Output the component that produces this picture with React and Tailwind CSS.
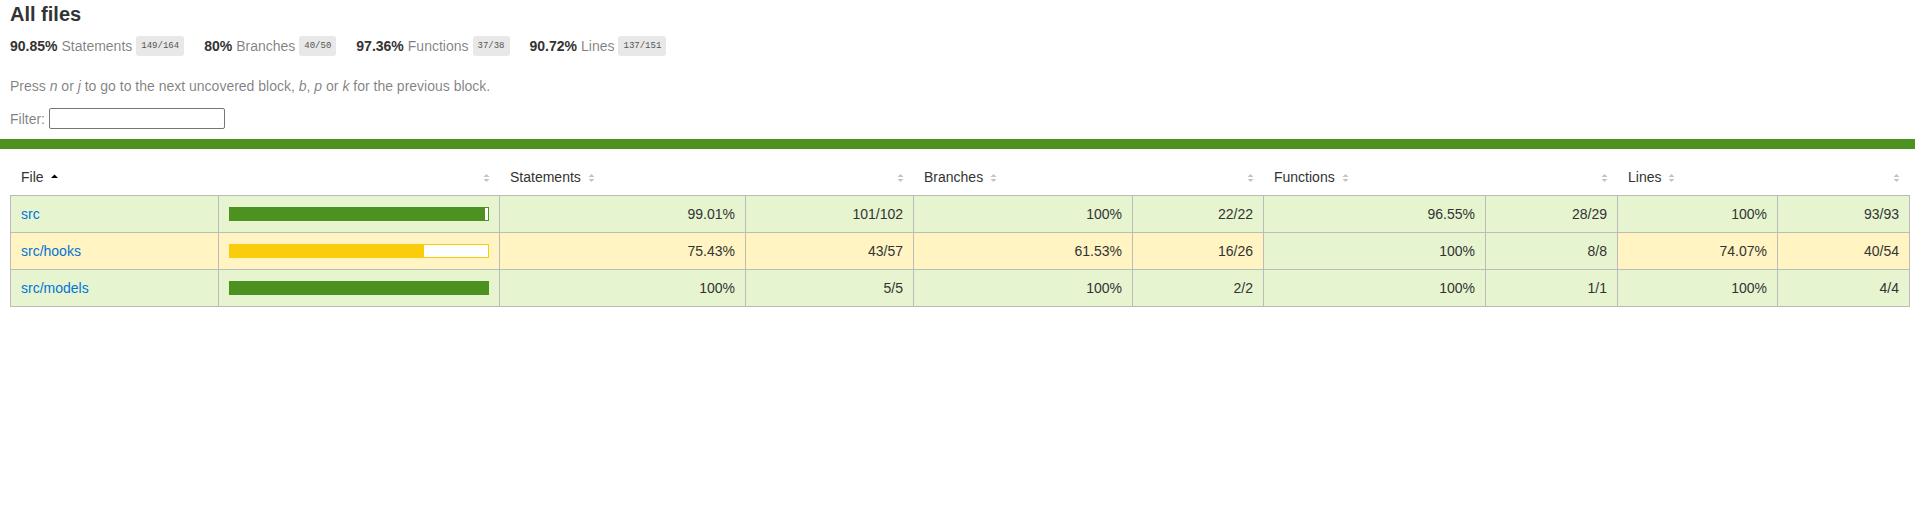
import React from 'react';

const summary = [
  { pct: '90.85%', label: 'Statements', frac: '149/164' },
  { pct: '80%', label: 'Branches', frac: '40/50' },
  { pct: '97.36%', label: 'Functions', frac: '37/38' },
  { pct: '90.72%', label: 'Lines', frac: '137/151' },
];

const rows = [
  {
    file: 'src',
    level: 'high',
    bar: 99,
    cells: [
      ['99.01%', '101/102', 'high'],
      ['100%', '22/22', 'high'],
      ['96.55%', '28/29', 'high'],
      ['100%', '93/93', 'high'],
    ],
  },
  {
    file: 'src/hooks',
    level: 'medium',
    bar: 75,
    cells: [
      ['75.43%', '43/57', 'medium'],
      ['61.53%', '16/26', 'medium'],
      ['100%', '8/8', 'high'],
      ['74.07%', '40/54', 'medium'],
    ],
  },
  {
    file: 'src/models',
    level: 'high',
    bar: 100,
    cells: [
      ['100%', '5/5', 'high'],
      ['100%', '2/2', 'high'],
      ['100%', '1/1', 'high'],
      ['100%', '4/4', 'high'],
    ],
  },
];

const cols = 'grid grid-cols-[208px_281px_246px_168px_219px_131px_222px_132px_160px_132px]';

const bgFor = level => (level === 'medium' ? 'bg-[#fff4c2]' : 'bg-[#e6f5d0]');

const Sorter = ({ active }) => (
  <svg width="7" height="10" viewBox="0 0 7 10" className="inline-block">
    {active ? (
      <path d="M0 5 L3.5 1.5 L7 5 Z" fill="#000" />
    ) : (
      <>
        <path d="M0.5 4 L3.5 1 L6.5 4 Z" fill="#c4c4c4" />
        <path d="M0.5 6 L3.5 9 L6.5 6 Z" fill="#c4c4c4" />
      </>
    )}
  </svg>
);

const HeadText = ({ label, active }) => (
  <div className="pt-[18px] pb-[8px] px-[10px] leading-[20px] whitespace-nowrap">
    {label}
    <span className="ml-[7px]">
      <Sorter active={active} />
    </span>
  </div>
);

const HeadSort = () => (
  <div className="pt-[18px] pb-[8px] px-[10px] leading-[20px] text-right">
    <Sorter />
  </div>
);

const Bar = ({ pct, level }) => {
  const fill = level === 'medium' ? 'bg-[#f9cd0b]' : 'bg-[#4d9221]';
  const border = level === 'medium' ? 'border-[#f9cd0b]' : 'border-[#4d9221]';
  return (
    <div className={`flex h-[14px] w-full border bg-white ${border}`}>
      <div className={`h-full ${fill}`} style={{ width: `${pct}%` }} />
    </div>
  );
};

export default function App() {
  return (
    <div className="min-h-screen bg-white text-[14px] text-[#333] font-['Liberation_Sans',Arial,sans-serif]">
      <div className="px-[10px] pt-[3px]">
        <h1 className="text-[20px] leading-[23px] font-bold">All files</h1>
        <div className="mt-[10px] flex h-[20px] items-center leading-[20px]">
          {summary.map(s => (
            <div key={s.label} className="mr-[20px] flex items-center gap-[4px]">
              <span className="font-bold">{s.pct}</span>
              <span className="text-black/50">{s.label}</span>
              <span className="rounded-[3px] bg-[#e8e8e8] px-[5px] py-[4px] text-[9px] leading-[12px] text-[#555] font-['Liberation_Mono',Consolas,monospace]">
                {s.frac}
              </span>
            </div>
          ))}
        </div>
        <p className="mt-[20px] leading-[20px] text-black/50">
          Press <em>n</em> or <em>j</em> to go to the next uncovered block, <em>b</em>,{' '}
          <em>p</em> or <em>k</em> for the previous block.
        </p>
        <div className="mt-[12px] flex h-[21px] items-center text-black/50">
          <label className="leading-[20px]">Filter:</label>
          <input
            type="search"
            className="ml-[4px] h-[21px] w-[176px] rounded-[2px] border border-[#767676] bg-white px-1 text-[13px] outline-none"
          />
        </div>
      </div>

      <div className="mt-[10px] h-[10px] bg-[#4d9221]" />

      <div className="px-[10px]">
        <div className={`${cols} ml-[1px]`}>
          <HeadText label="File" active />
          <HeadSort />
          <HeadText label="Statements" />
          <HeadSort />
          <HeadText label="Branches" />
          <HeadSort />
          <HeadText label="Functions" />
          <HeadSort />
          <HeadText label="Lines" />
          <HeadSort />
        </div>

        <div className={`${cols} w-max border-l border-t border-[#bbb]`}>
          {rows.map(r => (
            <React.Fragment key={r.file}>
              <div className={`border-r border-b border-[#bbb] px-[10px] py-[8px] leading-[20px] ${bgFor(r.level)}`}>
                <a href="#" className="text-[#0074d9]">
                  {r.file}
                </a>
              </div>
              <div className={`flex items-center border-r border-b border-[#bbb] px-[10px] ${bgFor(r.level)}`}>
                <Bar pct={r.bar} level={r.level} />
              </div>
              {r.cells.map(([pct, abs, lvl], i) => (
                <React.Fragment key={i}>
                  <div className={`border-r border-b border-[#bbb] px-[10px] py-[8px] text-right leading-[20px] ${bgFor(lvl)}`}>
                    {pct}
                  </div>
                  <div className={`border-r border-b border-[#bbb] px-[10px] py-[8px] text-right leading-[20px] ${bgFor(lvl)}`}>
                    {abs}
                  </div>
                </React.Fragment>
              ))}
            </React.Fragment>
          ))}
        </div>
      </div>
    </div>
  );
}
